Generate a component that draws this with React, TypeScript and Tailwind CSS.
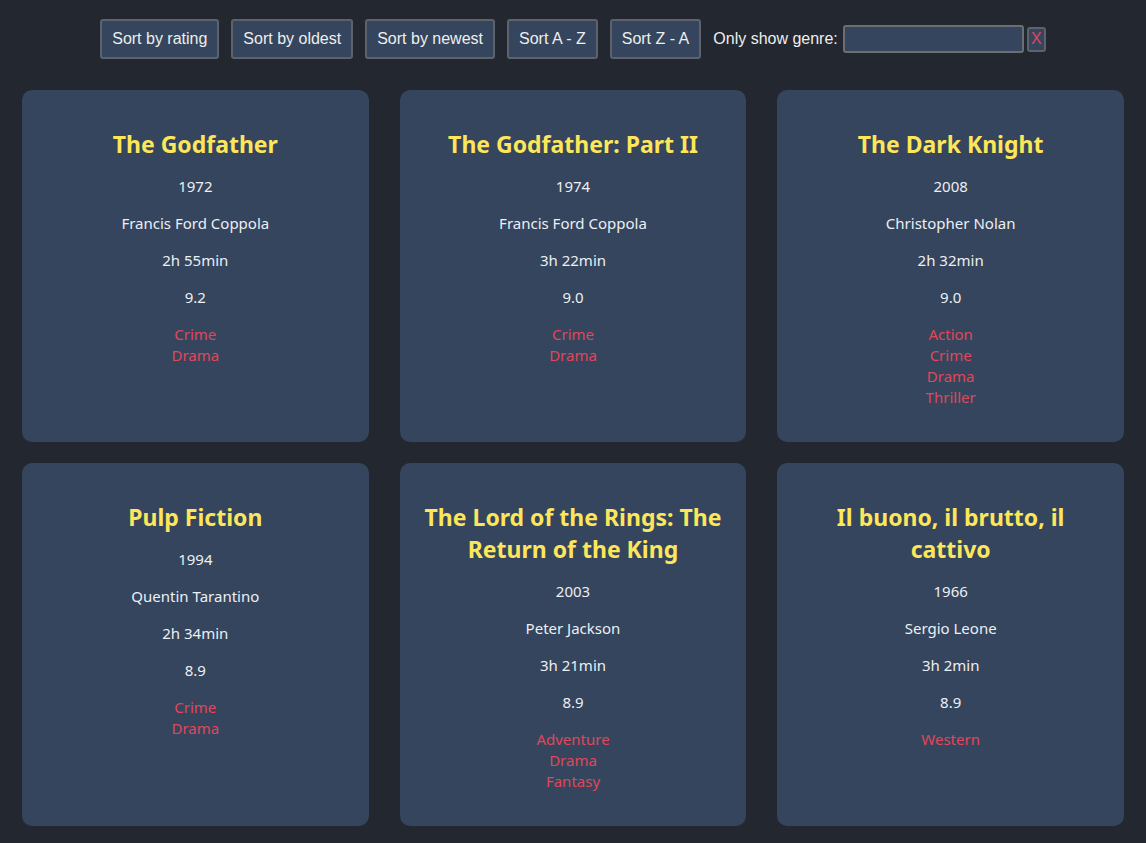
import { useState } from "react";

type Movie = {
  title: string;
  year: number;
  director: string;
  length: string;
  rating: string;
  genres: string[];
};

const movies: Movie[] = [
  { title: "The Godfather", year: 1972, director: "Francis Ford Coppola", length: "2h 55min", rating: "9.2", genres: ["Crime", "Drama"] },
  { title: "The Godfather: Part II", year: 1974, director: "Francis Ford Coppola", length: "3h 22min", rating: "9.0", genres: ["Crime", "Drama"] },
  { title: "The Dark Knight", year: 2008, director: "Christopher Nolan", length: "2h 32min", rating: "9.0", genres: ["Action", "Crime", "Drama", "Thriller"] },
  { title: "Pulp Fiction", year: 1994, director: "Quentin Tarantino", length: "2h 34min", rating: "8.9", genres: ["Crime", "Drama"] },
  { title: "The Lord of the Rings: The Return of the King", year: 2003, director: "Peter Jackson", length: "3h 21min", rating: "8.9", genres: ["Adventure", "Drama", "Fantasy"] },
  { title: "Il buono, il brutto, il cattivo", year: 1966, director: "Sergio Leone", length: "3h 2min", rating: "8.9", genres: ["Western"] },
];

const sortButtons = ["Sort by rating", "Sort by oldest", "Sort by newest", "Sort A - Z", "Sort Z - A"];

export default function App() {
  const [genre, setGenre] = useState("");

  return (
    <div className="min-h-screen bg-[#23272f] pb-[17px]">
      {/* Sort / filter bar */}
      <div
        className="flex items-center justify-center gap-3 pt-[19px] text-[16px] text-[#eeeeee]"
        style={{ fontFamily: '"Liberation Sans", Arial, sans-serif' }}
      >
        {sortButtons.map((label) => (
          <button
            key={label}
            className="h-[40px] rounded-[3px] border-2 border-[#5e636b] bg-[#34455d] px-[10px] text-[16px] text-[#eeeeee]"
          >
            {label}
          </button>
        ))}
        <div className="flex items-center">
          <span className="mr-[5px]">Only show genre:</span>
          <input
            value={genre}
            onChange={(e) => setGenre(e.target.value)}
            className="h-[28px] w-[181px] rounded-[3px] border-2 border-[#6b6e73] bg-[#34455d] px-1 text-[#eeeeee] outline-none"
          />
          <button className="ml-[3px] flex h-[25px] w-[19px] items-center justify-center rounded-[3px] border-2 border-[#5e636b] bg-[#34455d] text-[16px] text-[#e0475a]">
            X
          </button>
        </div>
      </div>

      {/* Movie cards */}
      <div
        className="mt-[31px] grid grid-cols-3 gap-x-[31px] gap-y-[21px] px-[22px]"
        style={{ fontFamily: '"Noto Sans", "Open Sans", sans-serif' }}
      >
        {movies.map((m) => (
          <div key={m.title} className="flex flex-col items-center rounded-[10px] bg-[#34455d] px-5 pt-[38px] pb-[34px] text-center">
            <h2 className="text-[23px] font-bold leading-[32px] text-[#fde65a]">{m.title}</h2>
            <p className="mt-4 text-[15px] leading-[21px] text-[#eceff4]">{m.year}</p>
            <p className="mt-4 text-[15px] leading-[21px] text-[#eceff4]">{m.director}</p>
            <p className="mt-4 text-[15px] leading-[21px] text-[#eceff4]">{m.length}</p>
            <p className="mt-4 text-[15px] leading-[21px] text-[#eceff4]">{m.rating}</p>
            <ul className="mt-4 text-[15px] leading-[21px] text-[#e0475a]">
              {m.genres.map((g) => (
                <li key={g}>{g}</li>
              ))}
            </ul>
          </div>
        ))}
      </div>
    </div>
  );
}
